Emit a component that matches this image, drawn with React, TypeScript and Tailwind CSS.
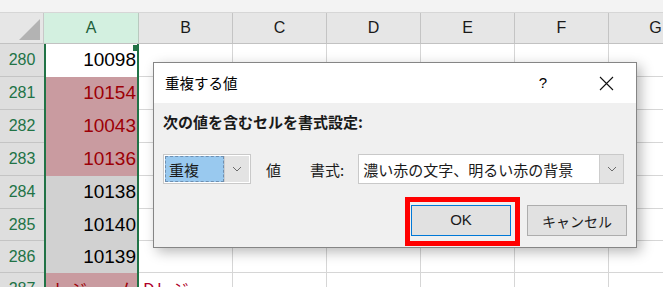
import React from 'react';

// Excel の「重複する値」ダイアログ画面
const COLS = ['B', 'C', 'D', 'E', 'F', 'G'];

type Kind = 'active' | 'dup' | 'sel';

const ROWS: { n: number; h: string; a: string; kind: Kind; b?: string }[] = [
  { n: 280, h: 'h-[33px]', a: '10098', kind: 'active' },
  { n: 281, h: 'h-[33px]', a: '10154', kind: 'dup' },
  { n: 282, h: 'h-[33px]', a: '10043', kind: 'dup' },
  { n: 283, h: 'h-[33px]', a: '10136', kind: 'dup' },
  { n: 284, h: 'h-[33px]', a: '10138', kind: 'sel' },
  { n: 285, h: 'h-[32px]', a: '10140', kind: 'sel' },
  { n: 286, h: 'h-[32px]', a: '10139', kind: 'sel' },
  { n: 287, h: 'h-[32px]', a: 'レジューム', kind: 'dup', b: 'Dレジ' },
];

const cellA: Record<Kind, string> = {
  active: 'bg-white text-black justify-end',
  dup: 'bg-[#c99ba0] text-[#9c0006] justify-end',
  sel: 'bg-[#d1d1d1] text-black justify-end',
};

function Chevron() {
  return (
    <svg width="10" height="6" viewBox="0 0 10 6">
      <path d="M1 1 L5 5 L9 1" fill="none" stroke="#6b6b6b" strokeWidth="1" />
    </svg>
  );
}

export default function App() {
  const jp = "font-['Noto_Sans_CJK_JP',sans-serif]";

  return (
    <div className="relative w-[663px] h-[287px] overflow-hidden bg-white font-['Liberation_Sans',sans-serif]">
      {/* 上部の帯 */}
      <div className="h-[13px] bg-[#f3f3f3] border-b border-[#d6d6d6]" />

      {/* 列見出し */}
      <div className="flex h-[31px] border-b border-[#c2c2c2] bg-[#e6e6e6]">
        <div className="w-[44px] shrink-0 flex items-end justify-end pr-[3px] pb-[3px] border-r border-[#c8c8c8]">
          <svg width="21" height="21" viewBox="0 0 21 21">
            <polygon points="21,0 21,21 0,21" fill="#b3b3b3" />
          </svg>
        </div>
        <div className="w-[95px] shrink-0 flex items-center justify-center bg-[#d3f0e0] border-r border-[#b9c9bf] text-[16px] text-[#1e5f3a]">
          A
        </div>
        {COLS.map((c) => (
          <div
            key={c}
            className="w-[94px] shrink-0 flex items-center justify-center border-r border-[#c4c4c4] text-[16px] text-[#1a1a1a]"
          >
            {c}
          </div>
        ))}
      </div>

      {/* 行 */}
      {ROWS.map((r, i) => (
        <div key={r.n} className={`flex ${r.h}`}>
          <div className="w-[44px] shrink-0 flex items-center justify-center bg-[#dedede] border-b border-[#c4c4c4] text-[16px] text-[#217346]">
            {r.n}
          </div>
          <div
            className={`relative w-[95px] shrink-0 flex items-center pr-[1px] border-x-2 border-[#217346] text-[19px] whitespace-nowrap overflow-hidden ${cellA[r.kind]} ${
              r.n === 287 ? `!justify-start pl-[7px] !text-[17px] ${jp}` : ''
            }`}
          >
            {r.a}
            {i === 0 && (
              <div className="absolute right-[-3px] top-[1px] w-[7px] h-[6px] bg-[#217346]" />
            )}
          </div>
          {COLS.map((c, j) => (
            <div
              key={c}
              className={`w-[94px] shrink-0 flex items-center border-r border-b border-[#d6d6d6] whitespace-nowrap overflow-hidden ${
                j === 0 && r.b ? `pl-[4px] text-[17px] text-[#b0002a] ${jp}` : ''
              }`}
            >
              {j === 0 ? r.b : null}
            </div>
          ))}
        </div>
      ))}

      {/* ダイアログ */}
      <div
        className={`absolute left-[153px] top-[62px] w-[484px] h-[186px] flex flex-col border border-[#858585] bg-[#f0f0f0] shadow-[4px_4px_12px_rgba(0,0,0,0.28)] ${jp}`}
      >
        {/* タイトルバー */}
        <div className="h-[40px] shrink-0 flex items-center bg-white pl-[11px] pr-[22px]">
          <span className="text-[14.5px] leading-none text-black">重複する値</span>
          <span className="ml-auto mr-[52px] text-[15px] font-['Liberation_Sans',sans-serif] text-black">?</span>
          <svg width="15" height="15" viewBox="0 0 15 15">
            <path d="M1 1 L14 14 M14 1 L1 14" stroke="#111" strokeWidth="1.1" />
          </svg>
        </div>

        {/* 本文 */}
        <div className="flex flex-col flex-1 pl-[9px] pr-[8px]">
          <div className="mt-[8px] h-[20px] flex items-center text-[15px] font-bold text-[#1a1a1a] leading-none">
            次の値を含むセルを書式設定:
          </div>

          <div className="mt-[23px] h-[30px] flex items-center text-[15px] text-[#1a1a1a]">
            <div className="w-[88px] h-[30px] flex border border-[#c9c9c9] bg-white p-[1px]">
              <div className="flex-1 flex items-center pl-[3px] bg-[#99c9ef] border border-dashed border-[#6f8fb0] leading-none">
                重複
              </div>
              <div className="w-[25px] flex items-center justify-center bg-[#e3e3e3] border-l border-[#cdcdcd]">
                <Chevron />
              </div>
            </div>
            <span className="ml-[15px] leading-none">値</span>
            <span className="ml-[29px] leading-none">書式:</span>
            <div className="ml-[14px] w-[266px] h-[30px] flex border border-[#c9c9c9] bg-white">
              <div className="flex-1 flex items-center pl-[4px] leading-none whitespace-nowrap">
                濃い赤の文字、明るい赤の背景
              </div>
              <div className="w-[24px] flex items-center justify-center bg-[#e3e3e3] border-l border-[#cdcdcd]">
                <Chevron />
              </div>
            </div>
          </div>

          <div className="mt-[21px] flex justify-end gap-[16px] pr-[1px]">
            <button className="w-[100px] h-[31px] flex items-center justify-center bg-[#e1e1e1] border border-[#0078d7] text-[15px] text-[#1a1a1a] font-['Liberation_Sans',sans-serif]">
              OK
            </button>
            <button className="w-[100px] h-[31px] flex items-center justify-center bg-[#e1e1e1] border border-[#adadad] text-[14px] text-[#1a1a1a] leading-none">
              キャンセル
            </button>
          </div>
        </div>

        {/* 赤枠の注釈 */}
        <div className="absolute left-[251px] top-[134px] w-[115px] h-[49px] border-[5px] border-[#ff0000]" />
      </div>
    </div>
  );
}
